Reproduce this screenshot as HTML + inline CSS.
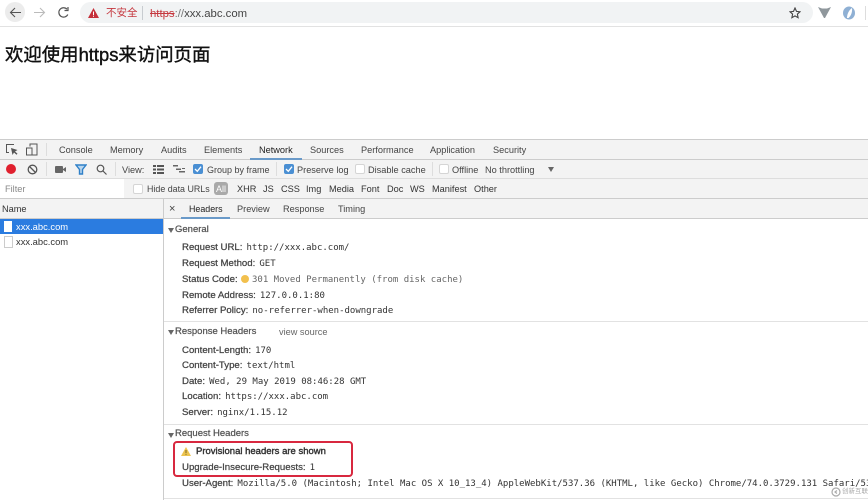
<!DOCTYPE html>
<html><head><meta charset="utf-8">
<style>
html,body{margin:0;padding:0;background:#fff}
#p{position:relative;width:868px;height:500px;overflow:hidden;background:#fff;font-family:"Liberation Sans","Noto Sans CJK SC",sans-serif;filter:blur(.35px)}
#p div,#p svg{position:absolute}
.t{position:absolute;white-space:nowrap;font-size:9.2px;line-height:14px;color:#444;margin-top:1px}
.k{color:#444;-webkit-text-stroke:.25px #444;font-size:9.650px}
.m{font-family:"DejaVu Sans Mono",monospace;font-size:9px;color:#333;margin-left:1.500px}
.r{background:#e2e2e2;height:1px}
.g{color:#555;-webkit-text-stroke:.25px #555;font-size:9.500px}
</style></head><body><div id="p">

<div style="left:0;top:26px;width:868px;height:1px;background:#e2e2e2"></div>
<div style="left:5px;top:2px;width:20px;height:20px;border-radius:50%;background:#ececec"></div>
<svg style="left:9px;top:6px" width="13" height="13" viewBox="0 0 13 13" fill="none" stroke="#555" stroke-width="1.100"><path d="M12 6.500H1.500M6 2L1.500 6.500L6 11"/></svg>
<svg style="left:33px;top:6px" width="13" height="13" viewBox="0 0 13 13" fill="none" stroke="#bbb" stroke-width="1.100"><path d="M1 6.500H11.500M7 2L11.500 6.500L7 11"/></svg>
<svg style="left:57px;top:6px" width="13" height="13" viewBox="0 0 13 13" fill="none" stroke="#555" stroke-width="1.200"><path d="M10.800 8.500A4.700 4.700 0 1 1 10 3.200"/><path d="M11 1V4.500H7.500"/></svg>
<div style="left:80px;top:2px;width:733px;height:21px;border-radius:11px;background:#f1f3f4"></div>
<svg style="left:88px;top:8px" width="11" height="10" viewBox="0 0 11 10"><path d="M5.500 0L11 10H0Z" fill="#c5303a"/><rect x="5" y="3.500" width="1" height="3.500" fill="#fff"/><rect x="5" y="7.700" width="1" height="1.100" fill="#fff"/></svg>
<div class="t" style="left:106px;top:5px;font-size:10.500px;color:#c5383f">不安全</div>
<div style="left:142px;top:6px;width:1px;height:14px;background:#c8ccd0"></div>
<div class="t" style="left:150px;top:5.500px;font-size:11.350px;color:#444"><span style="color:#c5383f;text-decoration:line-through">https</span><span style="color:#777">://</span>xxx.abc.com</div>
<svg style="left:789px;top:7px" width="12" height="12" viewBox="0 0 12 12" fill="none" stroke="#444" stroke-width="1.100"><path d="M6 1L7.500 4.400L11 4.800L8.400 7.100L9.100 10.700L6 8.900L2.900 10.700L3.600 7.100L1 4.800L4.500 4.400Z"/></svg>
<svg style="left:818px;top:7px" width="13" height="12" viewBox="0 0 13 12"><path d="M0 0L4 1.500H9L13 0L7 11H6Z" fill="#8f979c"/></svg>
<svg style="left:842px;top:6px" width="14" height="14" viewBox="0 0 14 14"><ellipse cx="7" cy="7" rx="6" ry="6.500" fill="#8fb0d4"/><path d="M5 12C5 8 7 4 10 2C10.500 6 9 10 6.500 12Z" fill="#fff"/></svg>
<div style="left:865px;top:6px;width:1px;height:14px;background:#ddd"></div>

<div class="t" style="left:5px;top:41.500px;font-size:18.400px;line-height:24px;color:#111;-webkit-text-stroke:.4px #111">欢迎使用https来访问页面</div>

<!-- devtools -->
<div style="left:0;top:139px;width:868px;height:1px;background:#ccc"></div>
<div style="left:0;top:140px;width:868px;height:19px;background:#f3f3f3"></div>
<div style="left:0;top:159px;width:868px;height:1px;background:#ccc"></div>
<div style="left:0;top:160px;width:868px;height:18px;background:#f3f3f3"></div>
<div style="left:0;top:178px;width:868px;height:1px;background:#ddd"></div>
<div style="left:0;top:179px;width:868px;height:19px;background:#f3f3f3"></div>
<div style="left:0;top:198px;width:868px;height:1px;background:#ccc"></div>

<svg style="left:5px;top:143px" width="13" height="13" viewBox="0 0 13 13" fill="none" stroke="#555"><path d="M9 1.500H1.500V9.500H4"/><path d="M6 5L7.500 12L9 9.500L11.500 11.800L12.500 10.800L10 8.500L12.500 7Z" fill="#555" stroke="none"/></svg>
<svg style="left:25px;top:143px" width="13" height="13" viewBox="0 0 13 13" fill="none" stroke="#555"><path d="M5 3.500V1H12V12H5"/><rect x="1.500" y="5" width="5.500" height="7"/></svg>
<div style="left:46px;top:143px;width:1px;height:13px;background:#ddd"></div>
<div class="t" style="left:59px;top:142px">Console</div>
<div class="t" style="left:110px;top:142px">Memory</div>
<div class="t" style="left:161px;top:142px">Audits</div>
<div class="t" style="left:204px;top:142px">Elements</div>
<div class="t" style="left:259px;top:142px;color:#222">Network</div>
<div style="left:250px;top:158px;width:52px;height:2px;background:#6a9ac9"></div>
<div class="t" style="left:310px;top:142px">Sources</div>
<div class="t" style="left:361px;top:142px">Performance</div>
<div class="t" style="left:430px;top:142px">Application</div>
<div class="t" style="left:493px;top:142px">Security</div>

<!-- toolbar -->
<div style="left:6px;top:164px;width:10px;height:10px;border-radius:50%;background:#e0202e"></div>
<svg style="left:27px;top:164px" width="11" height="11" viewBox="0 0 11 11" fill="none" stroke="#555" stroke-width="1.300"><circle cx="5.500" cy="5.500" r="4.300"/><path d="M2.500 2.500L8.500 8.500"/></svg>
<div style="left:46px;top:162px;width:1px;height:14px;background:#ddd"></div>
<svg style="left:55px;top:166px" width="11" height="7" viewBox="0 0 11 7"><rect width="8" height="7" rx="1" fill="#666"/><path d="M8 3L11 1V6L8 4Z" fill="#666"/></svg>
<svg style="left:75px;top:164px" width="12" height="11" viewBox="0 0 12 11" fill="none" stroke="#2f80c8" stroke-width="1.400"><path d="M1 1H11L7.500 5.500V10H4.500V5.500Z" fill="#b9d6ee"/></svg>
<svg style="left:96px;top:164px" width="11" height="11" viewBox="0 0 11 11" fill="none" stroke="#555" stroke-width="1.200"><circle cx="4.500" cy="4.500" r="3.300"/><path d="M7 7L10.500 10.500"/></svg>
<div style="left:115px;top:162px;width:1px;height:14px;background:#ddd"></div>
<div class="t" style="left:122px;top:162px">View:</div>
<svg style="left:153px;top:165px" width="11" height="9" viewBox="0 0 11 9" fill="#555"><rect width="3" height="2"/><rect x="4" width="7" height="2"/><rect y="3.500" width="3" height="2"/><rect x="4" y="3.500" width="7" height="2"/><rect y="7" width="3" height="2"/><rect x="4" y="7" width="7" height="2"/></svg>
<svg style="left:173px;top:165px" width="12" height="9" viewBox="0 0 12 9" fill="#666"><rect width="5" height="1.500"/><rect x="3" y="3.500" width="5" height="1.500"/><rect x="6" y="6" width="6" height="1.500"/><rect x="9" y="3" width="3" height="1"/></svg>
<div style="left:193px;top:164px;width:10px;height:10px;border-radius:2px;background:#4a8fd3"></div>
<svg style="left:193px;top:164px" width="10" height="10" viewBox="0 0 10 10" fill="none" stroke="#fff" stroke-width="1.300"><path d="M2 5L4.300 7.300L8 2.700"/></svg>
<div class="t" style="left:207px;top:162px;font-size:9px">Group by frame</div>
<div style="left:276px;top:162px;width:1px;height:14px;background:#ddd"></div>
<div style="left:284px;top:164px;width:10px;height:10px;border-radius:2px;background:#4a8fd3"></div>
<svg style="left:284px;top:164px" width="10" height="10" viewBox="0 0 10 10" fill="none" stroke="#fff" stroke-width="1.300"><path d="M2 5L4.300 7.300L8 2.700"/></svg>
<div class="t" style="left:297px;top:162px">Preserve log</div>
<div style="left:355px;top:164px;width:8px;height:8px;border:1px solid #d5d5d5;border-radius:2px;background:#fff"></div>
<div class="t" style="left:368px;top:162px">Disable cache</div>
<div style="left:432px;top:162px;width:1px;height:14px;background:#ddd"></div>
<div style="left:439px;top:164px;width:8px;height:8px;border:1px solid #d5d5d5;border-radius:2px;background:#fff"></div>
<div class="t" style="left:452px;top:162px">Offline</div>
<div class="t" style="left:485px;top:162px">No throttling</div>
<svg style="left:548px;top:167px" width="6" height="5" viewBox="0 0 6 5"><path d="M0 0H6L3 5Z" fill="#666"/></svg>

<!-- filter bar -->
<div style="left:0;top:179px;width:124px;height:19px;background:#fff"></div>
<div class="t" style="left:5px;top:181px;color:#888">Filter</div>
<div style="left:133px;top:184px;width:8px;height:8px;border:1px solid #d5d5d5;border-radius:2px;background:#fff"></div>
<div class="t" style="left:147px;top:181px;font-size:8.900px">Hide data URLs</div>
<div style="left:214px;top:182px;width:14px;height:13px;border-radius:3px;background:#a9a9a9"></div>
<div class="t" style="left:216px;top:181px;color:#fff;font-size:9px">All</div>
<div class="t" style="left:237px;top:181px;color:#333">XHR</div>
<div class="t" style="left:263px;top:181px;color:#333">JS</div>
<div class="t" style="left:281px;top:181px;color:#333">CSS</div>
<div class="t" style="left:306px;top:181px;color:#333">Img</div>
<div class="t" style="left:329px;top:181px;color:#333">Media</div>
<div class="t" style="left:361px;top:181px;color:#333">Font</div>
<div class="t" style="left:387px;top:181px;color:#333">Doc</div>
<div class="t" style="left:410px;top:181px;color:#333">WS</div>
<div class="t" style="left:432px;top:181px;color:#333">Manifest</div>
<div class="t" style="left:474px;top:181px;color:#333">Other</div>

<!-- name column -->
<div style="left:0;top:199px;width:163px;height:20px;background:#f3f3f3"></div>
<div style="left:0;top:218px;width:163px;height:1px;background:#ccc"></div>
<div style="left:163px;top:199px;width:1px;height:301px;background:#ccc"></div>
<div class="t" style="left:2px;top:201px;color:#333">Name</div>
<div style="left:0;top:219px;width:163px;height:15px;background:#2b7ce0"></div>
<div style="left:4px;top:221px;width:8px;height:11px;background:#fff"></div>
<div class="t" style="left:16px;top:218.500px;color:#fff;font-size:9.400px">xxx.abc.com</div>
<div style="left:4px;top:236px;width:7px;height:10px;border:1px solid #ccc;background:#fff"></div>
<div class="t" style="left:16px;top:233.500px;color:#333;font-size:9.400px">xxx.abc.com</div>

<!-- detail tabs -->
<div style="left:164px;top:199px;width:704px;height:19px;background:#f3f3f3"></div>
<div style="left:164px;top:218px;width:704px;height:1px;background:#ccc"></div>
<div class="t" style="left:169px;top:201px;font-size:11px">×</div>
<div class="t" style="left:189px;top:201px;color:#222;font-size:8.900px">Headers</div>
<div style="left:181px;top:217px;width:49px;height:2px;background:#6a9ac9"></div>
<div class="t" style="left:237px;top:201px">Preview</div>
<div class="t" style="left:283px;top:201px">Response</div>
<div class="t" style="left:338px;top:201px">Timing</div>

<!-- headers -->
<svg style="left:168px;top:228px" width="6" height="5" viewBox="0 0 6 5"><path d="M0 0H6L3 5Z" fill="#666"/></svg>
<div class="t g" style="left:175px;top:222px">General</div>
<div class="t" style="left:182px;top:239px"><span class="k">Request URL:</span> <span class="m">http://xxx.abc.com/</span></div>
<div class="t" style="left:182px;top:255px"><span class="k">Request Method:</span> <span class="m">GET</span></div>
<div class="t" style="left:182px;top:271px"><span class="k">Status Code:</span></div>
<div style="left:241px;top:275px;width:8px;height:8px;border-radius:50%;background:#f2c04e"></div>
<div class="t" style="left:252px;top:271px"><span class="m" style="color:#666;margin:0">301 Moved Permanently (from disk cache)</span></div>
<div class="t" style="left:182px;top:287px"><span class="k">Remote Address:</span> <span class="m">127.0.0.1:80</span></div>
<div class="t" style="left:182px;top:302px"><span class="k">Referrer Policy:</span> <span class="m">no-referrer-when-downgrade</span></div>
<div class="r" style="left:164px;top:321px;width:704px"></div>

<svg style="left:168px;top:330px" width="6" height="5" viewBox="0 0 6 5"><path d="M0 0H6L3 5Z" fill="#666"/></svg>
<div class="t g" style="left:175px;top:324px">Response Headers</div>
<div class="t" style="left:279px;top:324px;color:#666">view source</div>
<div class="t" style="left:182px;top:342px"><span class="k">Content-Length:</span> <span class="m">170</span></div>
<div class="t" style="left:182px;top:357px"><span class="k">Content-Type:</span> <span class="m">text/html</span></div>
<div class="t" style="left:182px;top:373px"><span class="k">Date:</span> <span class="m">Wed, 29 May 2019 08:46:28 GMT</span></div>
<div class="t" style="left:182px;top:388px"><span class="k">Location:</span> <span class="m">https://xxx.abc.com</span></div>
<div class="t" style="left:182px;top:404px"><span class="k">Server:</span> <span class="m">nginx/1.15.12</span></div>
<div class="r" style="left:164px;top:424px;width:704px"></div>

<svg style="left:168px;top:433px" width="6" height="5" viewBox="0 0 6 5"><path d="M0 0H6L3 5Z" fill="#666"/></svg>
<div class="t g" style="left:175px;top:426px">Request Headers</div>
<svg style="left:181px;top:447px" width="10" height="9" viewBox="0 0 10 9"><path d="M5 0L10 9H0Z" fill="#ecc450"/><rect x="4.500" y="3" width="1" height="3" fill="#7a6420"/><rect x="4.500" y="6.800" width="1" height="1" fill="#7a6420"/></svg>
<div class="t" style="left:196px;top:444px;color:#333;-webkit-text-stroke:.4px #333;font-size:9.500px">Provisional headers are shown</div>
<div class="t" style="left:182px;top:459px"><span class="k">Upgrade-Insecure-Requests:</span> <span class="m">1</span></div>
<div style="left:173px;top:441px;width:176px;height:32px;border:2px solid #d8283f;border-radius:4px"></div>
<div class="t" style="left:182px;top:475px"><span class="k">User-Agent:</span> <span class="m">Mozilla/5.0 (Macintosh; Intel Mac OS X 10_13_4) AppleWebKit/537.36 (KHTML, like Gecko) Chrome/74.0.3729.131 Safari/537.36</span></div>
<div class="r" style="left:164px;top:498px;width:704px"></div>

<!-- watermark -->
<svg style="left:831px;top:487px" width="10" height="10" viewBox="0 0 10 10" fill="none" stroke="#aaa" stroke-width="1.200"><circle cx="5" cy="5" r="4"/><path d="M6 3.500L4 5L6 6.500"/></svg>
<div class="t" style="left:842px;top:484px;font-size:6.500px;color:#aaa">创新互联</div>
</div></body></html>
